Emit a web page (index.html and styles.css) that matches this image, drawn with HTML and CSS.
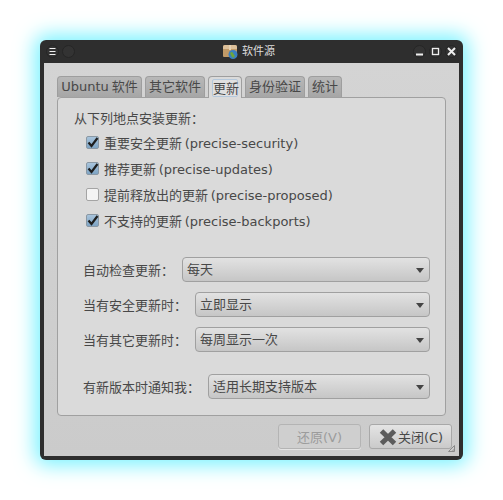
FILE: index.html
```html
<!DOCTYPE html>
<html lang="zh-CN">

<head>
    <meta charset="UTF-8">
    <title>软件源</title>
    <link rel="stylesheet" href="styles.css">
</head>

<body class="body">
    <div class="window">
        <div class="titlebar">
            <div class="wm-group">
                <span class="wm-btn">
                    <svg width="9" height="9" viewBox="0 0 9 9"><path d="M1.500 1.500h6M1.500 4.500h6M1.500 7.500h6" stroke="#f0f0f0" stroke-width="1.200" fill="none"/></svg>
                </span>
                <span class="wm-btn"></span>
            </div>
            <div class="title">
                <svg class="title-icon" width="15" height="15" viewBox="0 0 15 15">
                    <path d="M0 3q0-2 2-2h10q2 0 2 2v9q0 1-1 1H1q-1 0-1-1z" fill="#c09a68"/>
                    <path d="M0 3q0-2 2-2h10q2 0 2 2v2H0z" fill="#dcc09a"/>
                    <path d="M6 1h2v5H6z" fill="#e6d2b4"/>
                    <circle cx="10" cy="10.500" r="4.500" fill="#3a7fc0"/>
                    <path d="M7 9q2-2 3 0t2 3l-2 2q-2-2-3-5z" fill="#6fa63a"/>
                </svg>
                <span>软件源</span>
            </div>
            <div class="wm-group wm-right">
                <span class="wm-btn">
                    <svg width="9" height="9" viewBox="0 0 9 9"><path d="M1 7.500h7" stroke="#eee" stroke-width="2"/></svg>
                </span>
                <span class="wm-btn">
                    <svg width="9" height="9" viewBox="0 0 9 9"><rect x="1.500" y="1.500" width="6" height="6" stroke="#eee" stroke-width="1.300" fill="none"/></svg>
                </span>
                <span class="wm-btn">
                    <svg width="9" height="9" viewBox="0 0 9 9"><path d="M1 1l7 7M8 1l-7 7" stroke="#eee" stroke-width="2"/></svg>
                </span>
            </div>
        </div>

        <div class="content">
            <div class="tabs">
                <div class="tab tab-ubuntu">Ubuntu 软件</div>
                <div class="tab tab-wide">其它软件</div>
                <div class="tab tab-active"><span class="tab-focus">更新</span></div>
                <div class="tab tab-wide">身份验证</div>
                <div class="tab tab-stats">统计</div>
            </div>

            <div class="panel">
                <div class="heading">从下列地点安装更新：</div>
                <div class="checks">
                    <div class="check-row">
                        <span class="check on"><svg width="14" height="14" viewBox="0 0 14 14"><path d="M2.500 6.500L5.500 10L11.500 2" stroke="#1e1e1e" stroke-width="2.200" fill="none"/></svg></span>
                        重要安全更新 (precise-security)
                    </div>
                    <div class="check-row">
                        <span class="check on"><svg width="14" height="14" viewBox="0 0 14 14"><path d="M2.500 6.500L5.500 10L11.500 2" stroke="#1e1e1e" stroke-width="2.200" fill="none"/></svg></span>
                        推荐更新 (precise-updates)
                    </div>
                    <div class="check-row">
                        <span class="check"></span>
                        提前释放出的更新 (precise-proposed)
                    </div>
                    <div class="check-row">
                        <span class="check on"><svg width="14" height="14" viewBox="0 0 14 14"><path d="M2.500 6.500L5.500 10L11.500 2" stroke="#1e1e1e" stroke-width="2.200" fill="none"/></svg></span>
                        不支持的更新 (precise-backports)
                    </div>
                </div>
                <div class="combos">
                    <div class="combo-row"><label>自动检查更新：</label><div class="combo">每天</div></div>
                    <div class="combo-row"><label>当有安全更新时：</label><div class="combo">立即显示</div></div>
                    <div class="combo-row"><label>当有其它更新时：</label><div class="combo">每周显示一次</div></div>
                    <div class="combo-row combo-last"><label>有新版本时通知我：</label><div class="combo">适用长期支持版本</div></div>
                </div>
            </div>

            <div class="actions">
                <div class="button disabled">还原(V)</div>
                <div class="button">
                    <svg class="close-icon" width="20" height="20" viewBox="0 0 20 20"><path d="M3.500 4l13 12.500M16.500 4l-13 12.500" stroke="#5c5c5c" stroke-width="5" fill="none"/></svg>
                    关闭(C)
                </div>
            </div>
            <svg class="grip" width="7" height="7" viewBox="0 0 7 7"><path d="M6.500 0.500v6h-6zM6.500 4L4 6.500" stroke="#8a8a8a" stroke-width="1" fill="none"/></svg>
        </div>
    </div>
</body>

</html>
```

FILE: styles.css
```css
.body {
    margin: 0;
    background: #fff;
    height: 500px;
    overflow: hidden;
    font-family: "DejaVu Sans", "Noto Sans CJK SC", sans-serif;
    font-size: 13px;
    color: #484848;
}

.window {
    margin: 40px 0 0 40px;
    width: 423px;
    height: 420px;
    box-sizing: border-box;
    background: #2e2e2e;
    border-radius: 6px;
    box-shadow: 0 0 20px 5px rgb(120 242 255);
    padding: 0 4px 4px;
    display: flex;
    flex-direction: column;
}

.titlebar {
    height: 23px;
    flex: none;
    display: flex;
    align-items: center;
    justify-content: space-between;
    position: relative;
    color: #dcdcdc;
}

.wm-group {
    display: flex;
    gap: 3px;
    margin-left: 2px;
}

.wm-right {
    margin: 0 1px 0 0;
}

.wm-btn {
    box-sizing: border-box;
    width: 13px;
    height: 13px;
    border-radius: 50%;
    background: #333;
    border: 1px solid #262626;
    display: flex;
    align-items: center;
    justify-content: center;
}

.title {
    position: absolute;
    left: 179px;
    top: 3px;
    display: flex;
    align-items: center;
    gap: 4px;
    font-size: 11px;
    line-height: 17px;
}

.content {
    flex: 1;
    background: linear-gradient(#d4d4d4, #cbcbcb);
    padding: 13px 13px 0;
    position: relative;
    display: flex;
    flex-direction: column;
}

.tabs {
    display: flex;
    height: 21px;
    gap: 3px;
    position: relative;
    z-index: 1;
}

.tab {
    box-sizing: border-box;
    height: 21px;
    border: 1px solid #9e9e9e;
    border-bottom: none;
    border-radius: 4px 4px 0 0;
    background: linear-gradient(#b8b8b8, #a6a6a6);
    text-align: center;
    line-height: 20px;
    white-space: nowrap;
}

.tab-ubuntu {
    width: 85px;
    word-spacing: -1px;
}

.tab-wide {
    width: 60px;
}

.tab-active {
    width: 34px;
    height: 22px;
    background: #dadada;
    padding: 2px 3px 0;
}

.tab-focus {
    display: block;
    height: 18px;
    line-height: 17px;
    border: 1px solid #b4c8dc;
    border-radius: 2px;
    background: #e0e0e0;
    box-sizing: border-box;
}

.tab-stats {
    width: 34px;
}

.panel {
    box-sizing: border-box;
    width: 389px;
    height: 319px;
    background: #dadada;
    border: 1px solid #a0a0a0;
    border-radius: 4px;
    padding: 12px 16px 0;
}

.heading {
    line-height: 18px;
    margin-bottom: 5px;
}

.checks {
    display: flex;
    flex-direction: column;
    gap: 8px;
    padding-left: 12px;
}

.check-row {
    display: flex;
    align-items: center;
    height: 18px;
    gap: 5px;
    white-space: nowrap;
    word-spacing: -1.500px;
}

.check {
    box-sizing: border-box;
    width: 13px;
    height: 13px;
    flex: none;
    background: #f4f4f4;
    border: 1px solid #a4a4a4;
    border-radius: 2px;
}

.check.on {
    background: linear-gradient(#a8c4dc, #7ea4c4);
    border-color: #8a98a4;
}

.check svg {
    display: block;
    margin: -1px;
}

.combos {
    margin: 28px 0 0 9px;
    display: flex;
    flex-direction: column;
    gap: 10px;
}

.combo-row {
    display: flex;
    align-items: center;
    width: 347px;
    gap: 8px;
    white-space: nowrap;
}

.combo-last {
    margin-top: 12px;
}

.combo {
    flex: 1;
    box-sizing: border-box;
    height: 25px;
    line-height: 23px;
    padding-left: 4px;
    border: 1px solid #a0a0a0;
    border-radius: 4px;
    background: linear-gradient(#e2e2e2, #c6c6c6);
    position: relative;
}

.combo::after {
    content: "";
    position: absolute;
    right: 5px;
    top: 10px;
    border: solid transparent;
    border-width: 5px 4px 0;
    border-top-color: #444;
}

.actions {
    display: flex;
    justify-content: flex-end;
    gap: 8px;
    margin: 8px -6px 0 0;
}

.button {
    box-sizing: border-box;
    width: 83px;
    height: 25px;
    display: flex;
    align-items: center;
    justify-content: center;
    border: 1px solid #a8a8a8;
    border-radius: 3px;
    background: linear-gradient(#e4e4e4, #cacaca);
    white-space: nowrap;
}

.disabled {
    background: #cfcfcf;
    color: #9c9c9c;
    border-color: #b4b4b4;
    box-shadow: 0 1px 0 #e4e4e4;
}

.close-icon {
    flex: none;
}

.grip {
    position: absolute;
    right: 4px;
    bottom: 4px;
}
```
